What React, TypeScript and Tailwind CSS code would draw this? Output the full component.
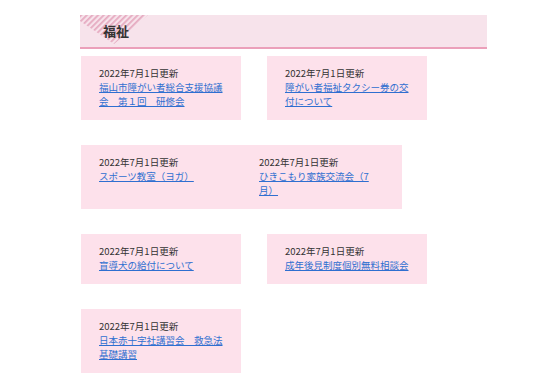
import React from 'react';

type Item = { date: string; title: string };

const Stripes: React.FC = () => (
  <svg className="absolute left-0 top-0" width="70" height="30" viewBox="0 0 70 30">
    <defs>
      <pattern id="hatch" width="4" height="4" patternUnits="userSpaceOnUse" patternTransform="rotate(-45)">
        <rect width="4" height="4" fill="#f7e3eb" />
        <rect width="4" height="1.8" fill="#e6abc1" />
      </pattern>
    </defs>
    <polygon points="0,0 68,0 34,29 0,6" fill="url(#hatch)" />
  </svg>
);

const Entry: React.FC<{ item: Item }> = ({ item }) => (
  <div className="w-[160px] shrink-0 pl-[18px] pr-[18px] pt-[10px] pb-[12px]">
    <p className="text-[9.5px] leading-[14px] text-[#333]">{item.date}</p>
    <a href="#" className="block text-[9.5px] leading-[14px] text-[#2f6fd0] underline underline-offset-1">
      {item.title}
    </a>
  </div>
);

const d = '2022年7月1日更新';

export default function App() {
  return (
    <div
      className="min-h-[380px] w-[554px] bg-white pt-[15px]"
      style={{ fontFamily: '"Noto Sans CJK JP", "Noto Sans", sans-serif' }}
    >
      <div className="ml-[80px] w-[407px]">
        {/* heading */}
        <div className="relative h-[34px] border-b-2 border-[#eba0ba] bg-[#f7e3eb]">
          <Stripes />
          <h2 className="relative pl-[23px] text-[13px] font-bold leading-[32px] text-[#333]">福祉</h2>
        </div>

        <div className="ml-px mt-[7px] flex flex-col gap-[25px]">
          <div className="flex gap-[26px]">
            <div className="bg-[#fde1eb]"><Entry item={{ date: d, title: '福山市障がい者総合支援協議会　第１回　研修会' }} /></div>
            <div className="bg-[#fde1eb]"><Entry item={{ date: d, title: '障がい者福祉タクシー券の交付について' }} /></div>
          </div>

          <div className="flex w-[321px] bg-[#fde1eb]">
            <Entry item={{ date: d, title: 'スポーツ教室（ヨガ）' }} />
            <Entry item={{ date: d, title: 'ひきこもり家族交流会（7月）' }} />
          </div>

          <div className="flex items-start gap-[26px]">
            <div className="bg-[#fde1eb]"><Entry item={{ date: d, title: '盲導犬の給付について' }} /></div>
            <div className="bg-[#fde1eb]"><Entry item={{ date: d, title: '成年後見制度個別無料相談会' }} /></div>
          </div>

          <div className="flex">
            <div className="bg-[#fde1eb]"><Entry item={{ date: d, title: '日本赤十字社講習会　救急法基礎講習' }} /></div>
          </div>
        </div>
      </div>
    </div>
  );
}
